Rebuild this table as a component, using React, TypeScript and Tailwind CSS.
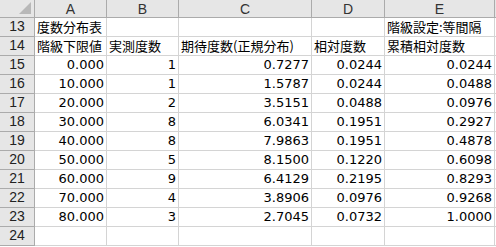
import React from "react";

const cols = ["A", "B", "C", "D", "E"];

type Row = { n: number; cells: (string | { t: string; r?: boolean })[] };

const data: [string, string, string, string, string][] = [
  ["0.000", "1", "0.7277", "0.0244", "0.0244"],
  ["10.000", "1", "1.5787", "0.0244", "0.0488"],
  ["20.000", "2", "3.5151", "0.0488", "0.0976"],
  ["30.000", "8", "6.0341", "0.1951", "0.2927"],
  ["40.000", "8", "7.9863", "0.1951", "0.4878"],
  ["50.000", "5", "8.1500", "0.1220", "0.6098"],
  ["60.000", "9", "6.4129", "0.2195", "0.8293"],
  ["70.000", "4", "3.8906", "0.0976", "0.9268"],
  ["80.000", "3", "2.7045", "0.0732", "1.0000"],
];

const jp = { fontFamily: '"Noto Sans CJK JP", "DejaVu Sans", sans-serif' };
const num = { fontFamily: '"DejaVu Sans", "Noto Sans CJK JP", sans-serif' };

function RowHead({ n }: { n: number }) {
  return (
    <div
      className="flex items-end justify-center border-r border-b border-[#ababab] bg-[#e6e6e6] pb-[1px] text-[14px] leading-[17px] text-[#222]"
      style={{ fontFamily: '"Liberation Sans", sans-serif' }}
    >
      {n}
    </div>
  );
}

function Cell({ t, right, jpText }: { t?: string; right?: boolean; jpText?: boolean }) {
  return (
    <div
      className={`flex items-end overflow-visible whitespace-nowrap border-r border-b border-[#d4d4d4] bg-white pb-[1px] text-[13px] leading-[17px] text-black ${
        right ? "justify-end pr-[2px]" : "justify-start pl-[2px]"
      }`}
      style={jpText ? jp : num}
    >
      {t ?? ""}
    </div>
  );
}

function Edge() {
  return <div className="border-b border-[#d4d4d4] bg-white" />;
}

export default function App() {
  return (
    <div className="h-[247px] w-[496px] overflow-hidden bg-white">
      <div className="grid grid-cols-[35px_72px_72px_133px_73px_110px_1fr] auto-rows-[19px] grid-rows-[18px]">
        {/* header */}
        <div className="relative border-r border-b border-[#ababab] bg-[#e6e6e6]">
          <div
            className="absolute bottom-[3px] right-[3px] h-0 w-0 border-l-[12px] border-t-[12px] border-l-transparent border-t-transparent"
            style={{ borderRight: "0", borderBottom: "12px solid #b8b8b8", borderLeft: "12px solid transparent" }}
          />
        </div>
        {cols.map((c) => (
          <div
            key={c}
            className="flex items-center justify-center border-r border-b border-[#ababab] bg-[#e6e6e6] pt-[1px] text-[14px] text-[#333]"
            style={{ fontFamily: '"Liberation Sans", sans-serif' }}
          >
            {c}
          </div>
        ))}
        <div className="border-b border-[#ababab] bg-[#e6e6e6]" />

        {/* row 13 */}
        <RowHead n={13} />
        <Cell t="度数分布表" jpText />
        <Cell />
        <Cell />
        <Cell />
        <Cell t="階級設定:等間隔" jpText />
        <Edge />

        {/* row 14 */}
        <RowHead n={14} />
        <Cell t="階級下限値" jpText />
        <Cell t="実測度数" jpText />
        <Cell t="期待度数(正規分布)" jpText />
        <Cell t="相対度数" jpText />
        <Cell t="累積相対度数" jpText />
        <Edge />

        {data.map((r, i) => (
          <React.Fragment key={i}>
            <RowHead n={15 + i} />
            {r.map((v, j) => (
              <Cell key={j} t={v} right />
            ))}
            <Edge />
          </React.Fragment>
        ))}

        <RowHead n={24} />
        <Cell />
        <Cell />
        <Cell />
        <Cell />
        <Cell />
        <Edge />
      </div>
    </div>
  );
}
